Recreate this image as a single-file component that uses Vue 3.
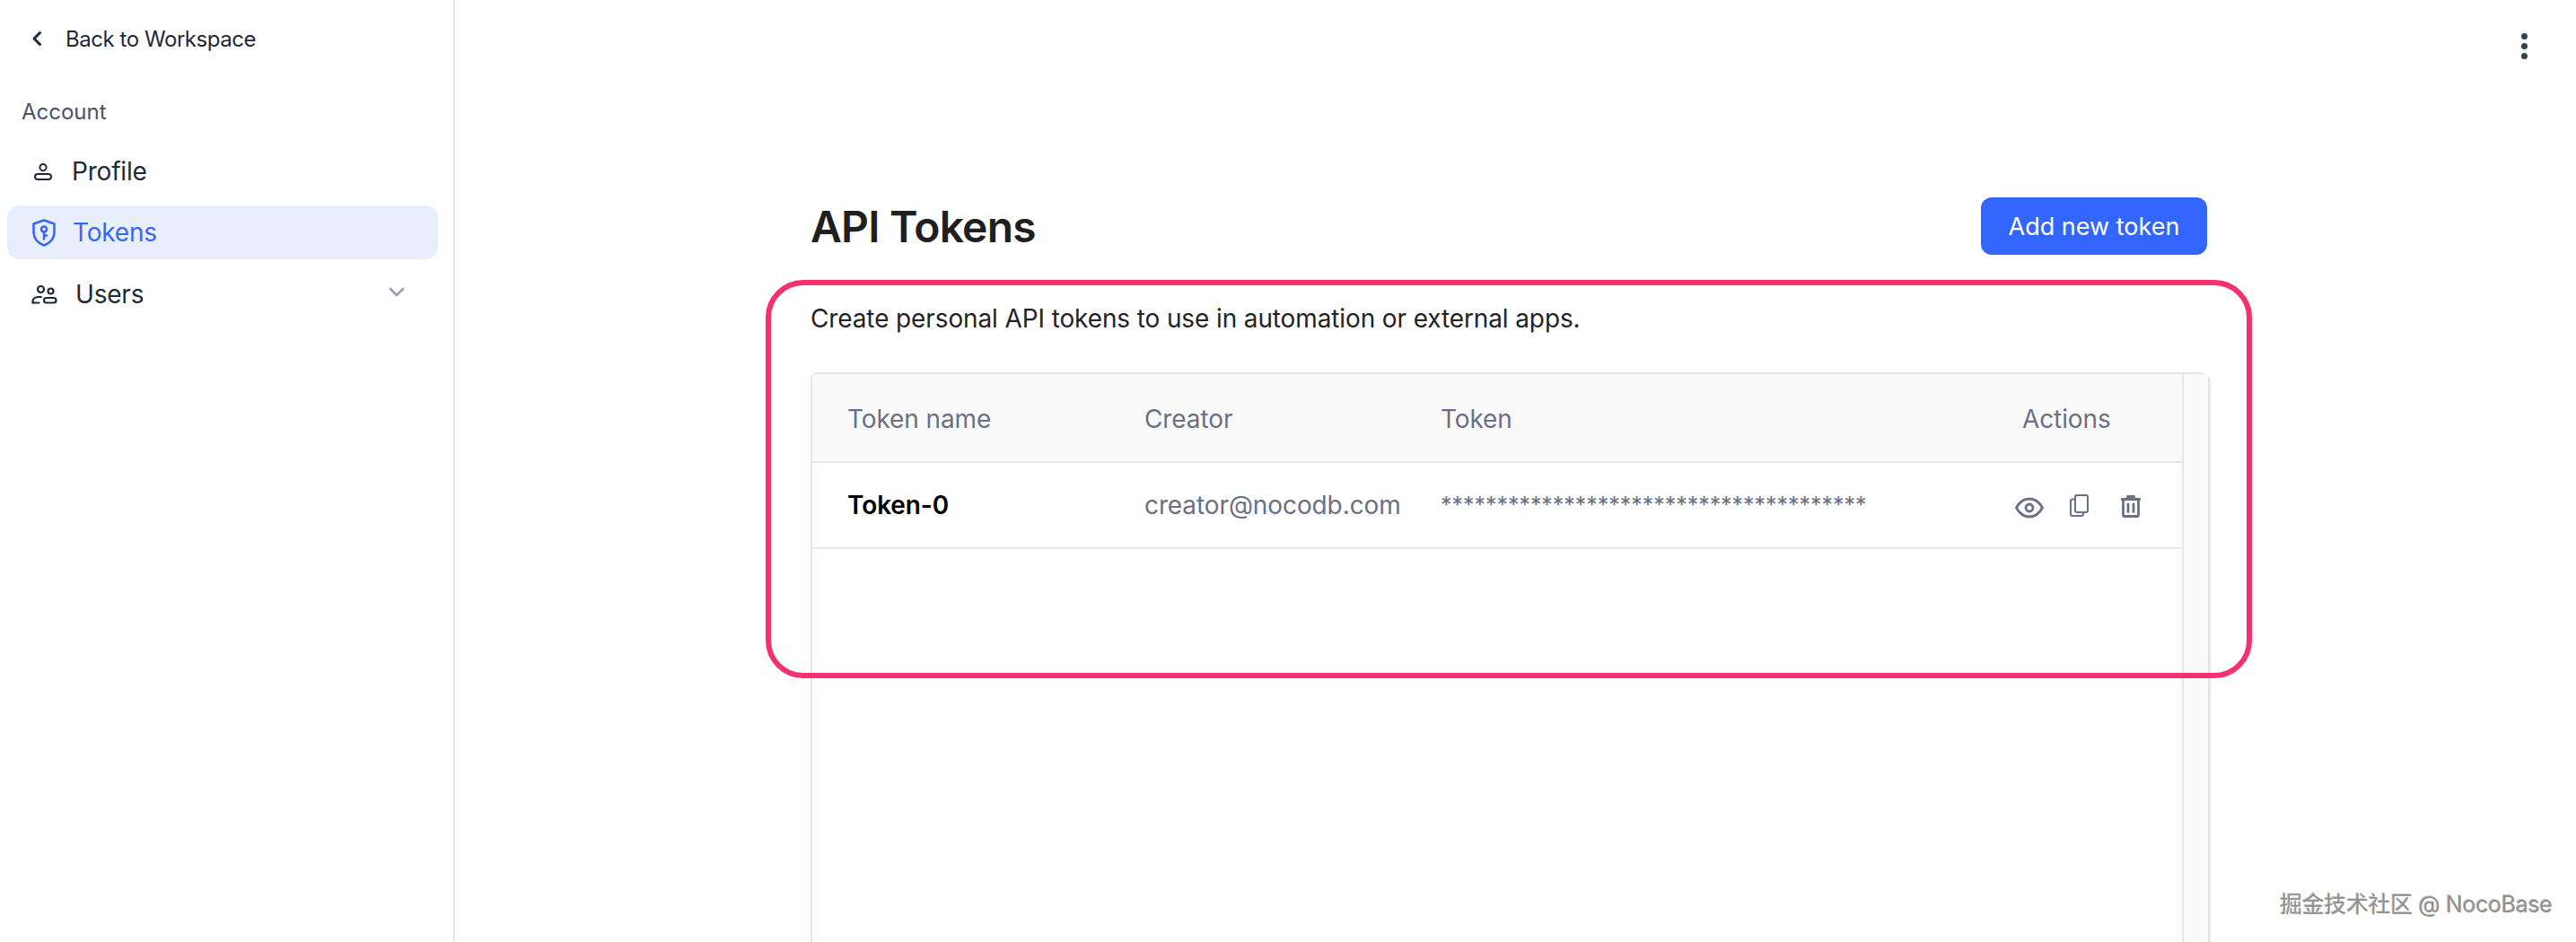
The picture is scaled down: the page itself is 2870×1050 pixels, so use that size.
<template>
  <div class="page">
    <aside class="sidebar">
      <a class="back-link">
        <svg class="back-icon" viewBox="0 0 12 18" fill="none"><path d="M9.500 2.500 3 9l6.500 6.500" stroke="#1f2937" stroke-width="3" stroke-linecap="round" stroke-linejoin="round"/></svg>
        <span>Back to Workspace</span>
      </a>
      <div class="section-label">Account</div>
      <nav class="nav">
        <a class="nav-item">
          <svg class="nav-icon icon-profile" viewBox="0 0 20 19" fill="none" stroke="#1f2937" stroke-width="2">
            <circle cx="10" cy="4.600" r="3.600"/>
            <rect x="1" y="12" width="18" height="6" rx="3"/>
          </svg>
          <span>Profile</span>
        </a>
        <a class="nav-item active">
          <svg class="nav-icon icon-shield" viewBox="0 0 26 31" fill="none" stroke="#3868f0" stroke-width="2.600" stroke-linejoin="round" stroke-linecap="round">
            <path d="M13 1.500 24.500 5.500V15c0 7-4.600 11.800-11.500 14.500C6.100 26.800 1.500 22 1.500 15V5.500Z"/>
            <circle cx="13" cy="11.500" r="3"/>
            <path d="M13 14.500V22.500M13 18.500h3"/>
          </svg>
          <span>Tokens</span>
        </a>
        <a class="nav-item users">
          <svg class="nav-icon icon-users" viewBox="0 0 29 21" fill="none" stroke="#1f2937" stroke-width="2.200" stroke-linecap="round">
            <circle cx="10.500" cy="4.500" r="3.500"/>
            <circle cx="21.500" cy="6.500" r="3"/>
            <path d="M1.500 19.500v-1.500c0-2.500 2.500-4.500 5.500-5h4"/>
            <path d="M1.500 19.500h7"/>
            <rect x="14" y="14" width="13.500" height="5.500" rx="2.750"/>
          </svg>
          <span>Users</span>
          <svg class="chevron" viewBox="0 0 18 11" fill="none"><path d="M2 2l7 7 7-7" stroke="#9aa0ab" stroke-width="2.600" stroke-linecap="round" stroke-linejoin="round"/></svg>
        </a>
      </nav>
    </aside>

    <main class="main">
      <div class="topbar">
        <div class="kebab"><i></i><i></i><i></i></div>
      </div>
      <div class="content">
        <header class="head">
          <h1>API Tokens</h1>
          <button class="add-btn">Add new token</button>
        </header>
        <p class="desc">Create personal API tokens to use in automation or external apps.</p>
        <div class="table">
          <div class="table-body">
            <div class="row head-row">
              <div class="cell name">Token name</div>
              <div class="cell creator">Creator</div>
              <div class="cell token">Token</div>
              <div class="cell actions">Actions</div>
            </div>
            <div class="row" v-for="item in tokens" :key="item.name">
              <div class="cell name strong">{{ item.name }}</div>
              <div class="cell creator">{{ item.creator }}</div>
              <div class="cell token mask">{{ item.mask }}</div>
              <div class="cell action-icons">
                <svg class="eye" viewBox="0 0 32 24" fill="none" stroke="#6b7085" stroke-width="2.800" stroke-linejoin="round">
                  <path d="M1.500 12C5 5.500 10 2 16 2s11 3.500 14.500 10C27 18.500 22 22 16 22S5 18.500 1.500 12Z"/>
                  <circle cx="16" cy="12" r="4"/>
                </svg>
                <svg class="copy" viewBox="0 0 21 25" fill="none" stroke="#6b7085" stroke-width="2" stroke-linejoin="round">
                  <rect x="6" y="1" width="14" height="19" rx="2"/>
                  <path d="M6 5.500H3a2 2 0 0 0-2 2V22a2 2 0 0 0 2 2h10a2 2 0 0 0 2-2v-2"/>
                </svg>
                <svg class="trash" viewBox="0 0 22 25" fill="none" stroke="#6b7085" stroke-width="2.800" stroke-linecap="round" stroke-linejoin="round">
                  <path d="M1 4.500h20"/>
                  <path d="M7.500 3.500V1.500h7v2"/>
                  <path d="M2.500 5v17a1.500 1.500 0 0 0 1.500 1.500h14a1.500 1.500 0 0 0 1.500-1.500V5"/>
                  <path d="M8 10v8.500M14 10v8.500"/>
                </svg>
              </div>
            </div>
          </div>
          <div class="scroll-strip"></div>
        </div>
      </div>
      <div class="highlight"></div>
    </main>
    <div class="watermark">掘金技术社区 @ NocoBase</div>
  </div>
</template>

<script setup>
const tokens = [
  { name: 'Token-0', creator: 'creator@nocodb.com', mask: '*'.repeat(38) },
]
</script>

<style>
html, body {
  margin: 0;
  overflow: hidden;
  background: #fff;
}
</style>

<style scoped>
.page {
  position: relative;
  display: flex;
  height: 1050px;
  font-family: Inter, "Noto Sans CJK SC", sans-serif;
  color: #1f2937;
  background: #fff;
  overflow: hidden;
}

/* Sidebar */
.sidebar {
  width: 505px;
  flex: none;
  box-sizing: content-box;
  border-right: 2px solid #e7e7e9;
  padding-top: 27px;
}
.back-link {
  display: flex;
  align-items: center;
  height: 32px;
  padding-left: 35px;
  font-size: 24px;
  letter-spacing: -0.45px;
  color: #1f2937;
}
.back-icon {
  width: 12px;
  height: 18px;
  margin-right: 26px;
}
.section-label {
  margin-top: 50px;
  padding-left: 24px;
  font-size: 24px;
  line-height: 32px;
  color: #4a5268;
}
.nav {
  display: flex;
  flex-direction: column;
  gap: 8px;
  margin: 20px 17px 0 8px;
}
.nav-item {
  display: flex;
  align-items: center;
  height: 60px;
  font-size: 28px;
  letter-spacing: -0.2px;
  border-radius: 14px;
  color: #1f2937;
}
.nav-item.active {
  background: #e8eefc;
  color: #3868f0;
}
.nav-item.users {
  margin-top: 1px;
}
.nav-icon {
  flex: none;
}
.icon-profile {
  width: 20px;
  height: 19px;
  margin: 0 22px 0 30px;
}
.icon-shield {
  width: 26px;
  height: 31px;
  margin: 0 19px 0 28px;
}
.icon-users {
  width: 29px;
  height: 21px;
  margin: 0 20px 0 27px;
}
.chevron {
  width: 18px;
  height: 11px;
  margin-left: auto;
  margin-right: 37px;
  margin-top: -6px;
}

/* Main */
.main {
  position: relative;
  flex: 1;
  min-width: 0;
  display: flex;
  flex-direction: column;
}
.topbar {
  display: flex;
  justify-content: flex-end;
  padding: 37px 54px 0 0;
  height: 220px;
  box-sizing: border-box;
}
.kebab {
  display: flex;
  flex-direction: column;
  gap: 4px;
}
.kebab i {
  display: block;
  width: 7px;
  height: 7px;
  border-radius: 50%;
  background: #374151;
}
.content {
  flex: 1;
  min-height: 0;
  display: flex;
  flex-direction: column;
  margin-left: 396px;
  width: 1560px;
}
.head {
  display: flex;
  align-items: center;
  justify-content: space-between;
  height: 64px;
  padding-right: 4px;
}
h1 {
  margin: 0;
  font-size: 48px;
  font-weight: 600;
  letter-spacing: -0.8px;
  color: #1f1f1f;
}
.add-btn {
  width: 252px;
  height: 64px;
  border: 0;
  border-radius: 12px;
  background: #3366ff;
  color: #fff;
  font-family: inherit;
  font-size: 27px;
  font-weight: 400;
}
.desc {
  margin: 53px 0 42px;
  font-size: 28px;
  line-height: 36px;
  letter-spacing: -0.12px;
  color: #1f2328;
}

/* Table */
.table {
  flex: 1;
  min-height: 0;
  display: flex;
  border: 2px solid #e7e7e9;
  border-bottom: 0;
  border-right-width: 3px;
  border-top-left-radius: 8px;
  border-top-right-radius: 12px;
}
.table-body {
  flex: 1;
  min-width: 0;
  border-right: 2px solid #e7e7e9;
}
.scroll-strip {
  width: 27px;
  flex: none;
  background: #fafafa;
}
.row {
  display: flex;
  align-items: center;
  box-sizing: border-box;
  height: 96px;
  border-bottom: 2px solid #e7e7e9;
  font-size: 28px;
  letter-spacing: -0.1px;
  color: #6b7085;
}
.head-row {
  height: 99px;
  padding-top: 2px;
  background: #f9f9fa;
}
.cell {
  flex: none;
  box-sizing: border-box;
}
.name {
  width: 370px;
  padding-left: 39px;
}
.creator {
  width: 330px;
}
.token {
  width: 640px;
}
.actions {
  padding-left: 8px;
}
.strong {
  font-weight: 600;
  color: #000;
}
.mask {
  font-size: 25px;
  letter-spacing: -0.04px;
}
.action-icons {
  display: flex;
  align-items: center;
}
.eye {
  width: 32px;
  height: 24px;
  margin-top: 6px;
}
.copy {
  width: 21px;
  height: 25px;
  margin: 1px 0 0 29px;
}
.trash {
  width: 22px;
  height: 25px;
  margin: 3px 0 0 36px;
}

/* Annotation drawn over the table */
.highlight {
  position: absolute;
  left: 346px;
  top: 312px;
  width: 1656px;
  height: 444px;
  box-sizing: border-box;
  border: 6px solid #f5306f;
  border-radius: 42px;
  pointer-events: none;
}
.watermark {
  position: absolute;
  left: 2540px;
  top: 992px;
  font-size: 25px;
  line-height: 32px;
  letter-spacing: -0.35px;
  color: #8f8f8f;
  text-shadow: 1px 1px 0 #fff, -1px -1px 0 rgba(0, 0, 0, 0.25);
  white-space: nowrap;
}
</style>
